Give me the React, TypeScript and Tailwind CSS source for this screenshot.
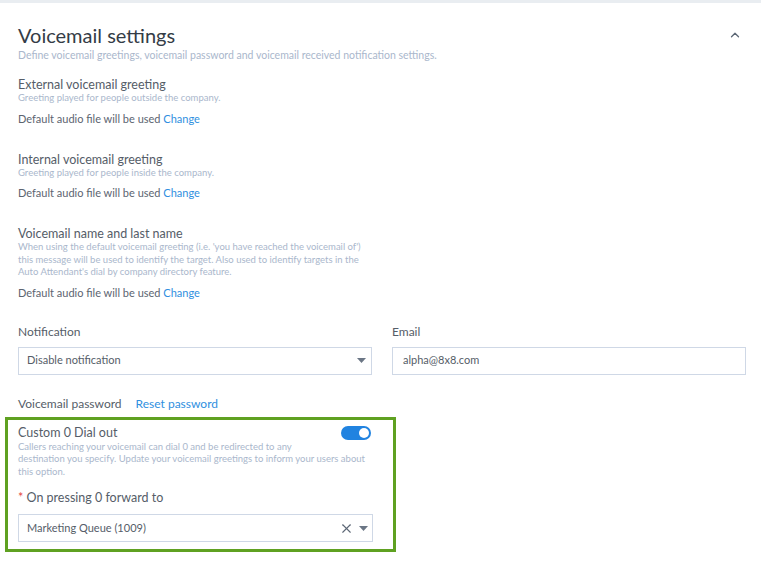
import { ChevronUp, X } from 'lucide-react';

const font = { fontFamily: 'Lato, "Open Sans", sans-serif' };

function Caret() {
  return (
    <svg width="9" height="5" viewBox="0 0 9 5" className="fill-[#6b7685]">
      <path d="M0 0h9L4.5 5z" />
    </svg>
  );
}

function AudioSetting({ title, hint }: { title: string; hint: React.ReactNode }) {
  return (
    <div>
      <div className="text-[12.5px] leading-[15px] text-[#555d68]">{title}</div>
      <div className="text-[9.5px] leading-[12.5px] text-[#aab7cc]">{hint}</div>
      <div className="mt-[7px] text-[11px] leading-[14px] text-[#5c6470]">
        Default audio file will be used <span className="text-[#2f8fe0]">Change</span>
      </div>
    </div>
  );
}

export default function App() {
  return (
    <div className="min-h-screen w-[761px] bg-white" style={font}>
      <div className="h-[3px] bg-[#e9edf1]" />
      <div className="pl-[18px] pr-[15px] pt-[19px]">
        <div className="flex items-start justify-between">
          <div>
            <h1 className="text-[20px] leading-[26px] text-[#343c46]">Voicemail settings</h1>
            <p className="text-[10.5px] leading-[14px] text-[#aab7cc]">
              Define voicemail greetings, voicemail password and voicemail received notification settings.
            </p>
          </div>
          <ChevronUp size={14} strokeWidth={2.2} className="mt-[6px] mr-[4px] text-[#5b6674]" />
        </div>

        <div className="mt-[15px] flex flex-col gap-[26px]">
          <AudioSetting title="External voicemail greeting" hint="Greeting played for people outside the company." />
          <AudioSetting title="Internal voicemail greeting" hint="Greeting played for people inside the company." />
          <AudioSetting
            title="Voicemail name and last name"
            hint={
              <>
                When using the default voicemail greeting (i.e. 'you have reached the voicemail of')
                <br />
                this message will be used to identify the target. Also used to identify targets in the
                <br />
                Auto Attendant's dial by company directory feature.
              </>
            }
          />
        </div>

        <div className="mt-[24px] grid grid-cols-2 gap-[20px]">
          <div>
            <div className="text-[12px] leading-[16px] text-[#555d68]">Notification</div>
            <div className="mt-[7px] flex h-[28px] items-center justify-between border border-[#cfd8e6] pl-[8px] pr-[5px] text-[11px] text-[#555d68]">
              <span>Disable notification</span>
              <Caret />
            </div>
          </div>
          <div>
            <div className="text-[12px] leading-[16px] text-[#555d68]">Email</div>
            <div className="mt-[7px] flex h-[28px] items-center border border-[#cfd8e6] pl-[10px] text-[11px] text-[#555d68]">
              alpha@8x8.com
            </div>
          </div>
        </div>

        <div className="mt-[21px] flex items-center text-[12px] leading-[16px]">
          <span className="text-[#555d68]">Voicemail password</span>
          <span className="ml-[14px] text-[#2f8fe0]">Reset password</span>
        </div>
      </div>

      <div className="ml-[5px] mt-[5px] w-[391px] border-[3px] border-[#5fa121] pb-[7px] pl-[10px] pr-[20px] pt-[5px]">
        <div className="flex items-start justify-between">
          <div className="text-[12.5px] leading-[16px] text-[#555d68]">Custom 0 Dial out</div>
          <div className="mr-[2px] mt-[1px] flex h-[14px] w-[30px] items-center justify-end rounded-full bg-[#2183e0] pr-[2px]">
            <div className="h-[10px] w-[10px] rounded-full bg-white" />
          </div>
        </div>
        <div className="text-[9.5px] leading-[12.5px] text-[#aab7cc]">
          Callers reaching your voicemail can dial 0 and be redirected to any
          <br />
          destination you specify. Update your voicemail greetings to inform your users about
          <br />
          this option.
        </div>
        <div className="mt-[12px] text-[12.5px] leading-[16px] text-[#555d68]">
          <span className="text-[#e5483f]">*</span> On pressing 0 forward to
        </div>
        <div className="mt-[8px] flex h-[28px] items-center justify-between border border-[#cfd8e6] pl-[8px] pr-[4px] text-[11px] text-[#555d68]">
          <span>Marketing Queue (1009)</span>
          <div className="flex items-center gap-[5px]">
            <X size={15} strokeWidth={1.8} className="text-[#5b6674]" />
            <Caret />
          </div>
        </div>
      </div>
    </div>
  );
}
